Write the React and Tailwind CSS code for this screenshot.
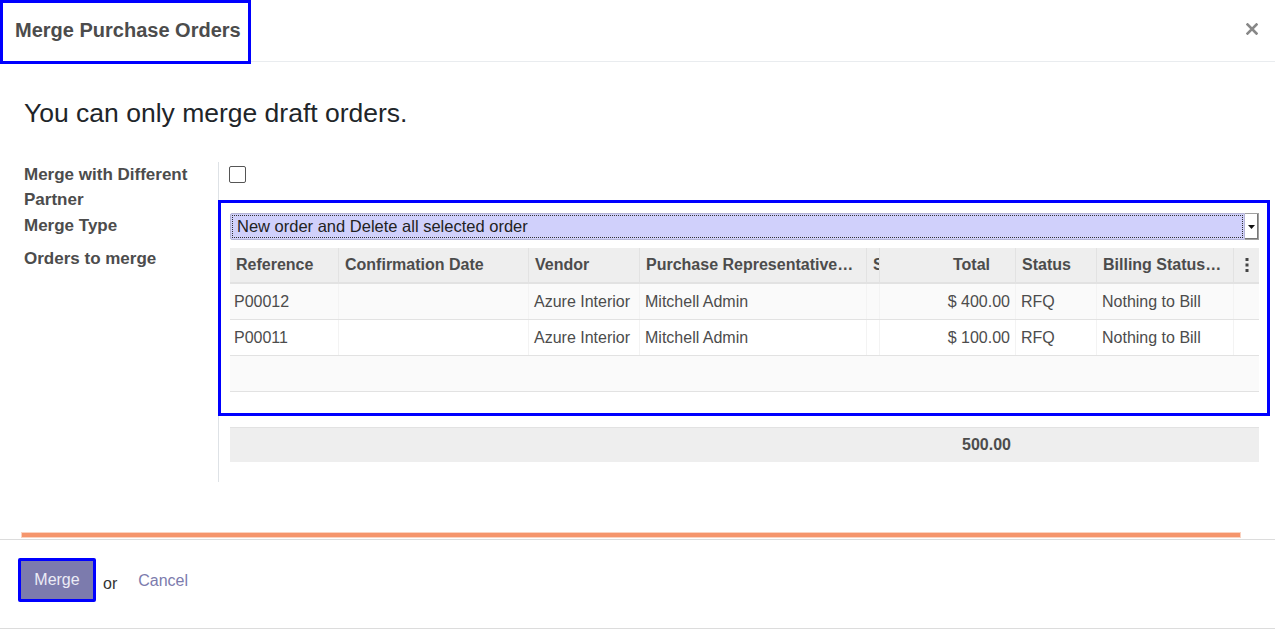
import React from "react";

const cols = "grid grid-cols-[109px_190px_111px_227px_13px_136px_81px_137px_25px]";

const orders = [
  { ref: "P00012", vendor: "Azure Interior", rep: "Mitchell Admin", total: "$ 400.00", status: "RFQ", billing: "Nothing to Bill" },
  { ref: "P00011", vendor: "Azure Interior", rep: "Mitchell Admin", total: "$ 100.00", status: "RFQ", billing: "Nothing to Bill" },
];

function HeadCell({ children, right }) {
  return (
    <div
      className={
        "h-[34px] flex items-center px-[6px] overflow-hidden whitespace-nowrap font-bold border-r border-[#e2e2e2] " +
        (right ? "justify-end pr-[25px]" : "")
      }
    >
      {children}
    </div>
  );
}

function Cell({ children, right, first }) {
  return (
    <div
      className={
        "h-[35px] flex items-center overflow-hidden whitespace-nowrap border-r border-[#f3f3f3] " +
        (first ? "pl-[4px] " : "pl-[5px] ") +
        (right ? "justify-end pr-[5px]" : "")
      }
    >
      {children}
    </div>
  );
}

export default function App() {
  return (
    <div className="h-[629px] bg-white flex flex-col text-[#4c4c4c] text-[16px] font-['Liberation_Sans',Arial,sans-serif]">
      <header className="h-[62px] shrink-0 border-b border-[#e9ecef] flex items-start justify-between">
        <div className="relative z-10 w-[251px] h-[64px] border-[3px] border-[#0000ff] bg-white flex items-center pl-[12px] pb-[4px] text-[20px] font-bold">
          Merge Purchase Orders
        </div>
        <button className="mt-[23px] mr-[17px] text-[#888]">
          <svg width="12" height="12" viewBox="0 0 12 12">
            <path d="M1.5 1.5 L10.5 10.5 M10.5 1.5 L1.5 10.5" stroke="currentColor" strokeWidth="2.6" strokeLinecap="square" />
          </svg>
        </button>
      </header>

      <div className="pl-[24px]">
        <h2 className="mt-[36px] text-[26.5px] leading-[30px] text-[#212529]">You can only merge draft orders.</h2>

        <div className="mt-[34px] flex">
          <div className="w-[195px] shrink-0 border-r border-[#dee2e6] font-bold text-[17px] leading-[25px]">
            <div className="w-[175px]">Merge with Different Partner</div>
            <div className="mt-[1px]">Merge Type</div>
            <div className="mt-[8px]">Orders to merge</div>
          </div>

          <div className="flex-1 pl-[11px] pr-[16px] pb-[20px]">
            <div className="ml-[-1px] mt-[4px] w-[17px] h-[17px] border border-[#555] rounded-[2px] bg-white" />

            <div className="mt-[17px] ml-[-12px] mr-[-11px] border-[3px] border-[#0000ff] pt-[10px] pl-[9px] pr-[8px] pb-[21px]">
              <div className="h-[27px] flex">
                <div className="flex-1 flex items-center bg-[#d0d0fb] rounded-l-[2px] border border-[#b5b5d5] outline outline-1 outline-dotted outline-[#333] outline-offset-[-3px] pl-[6px] text-[16.5px] text-[#222]">
                  New order and Delete all selected order
                </div>
                <div className="w-[14px] flex items-center justify-center bg-white border-y border-r border-[#a0a0a0] shadow-[inset_-1px_-1px_0_#777]">
                  <svg width="7" height="4" viewBox="0 0 7 4">
                    <path d="M0 0 H7 L3.5 4 Z" fill="#111" />
                  </svg>
                </div>
              </div>

              <div className="mt-[8px]">
                <div className={cols + " bg-[#eeeeee] border-b-2 border-[#e2e2e2]"}>
                  <HeadCell>Reference</HeadCell>
                  <HeadCell>Confirmation Date</HeadCell>
                  <HeadCell>Vendor</HeadCell>
                  <HeadCell>Purchase Representative…</HeadCell>
                  <HeadCell>Source</HeadCell>
                  <HeadCell right>Total</HeadCell>
                  <HeadCell>Status</HeadCell>
                  <HeadCell>Billing Status…</HeadCell>
                  <div className="h-[34px] flex items-center justify-center">
                    <svg width="4" height="14" viewBox="0 0 4 14">
                      <rect x="0.5" y="0" width="3" height="3" fill="#444" />
                      <rect x="0.5" y="5.5" width="3" height="3" fill="#444" />
                      <rect x="0.5" y="11" width="3" height="3" fill="#444" />
                    </svg>
                  </div>
                </div>

                {orders.map((o, i) => (
                  <div
                    key={o.ref}
                    className={cols + " border-b border-[#e2e2e2] " + (i % 2 === 0 ? "bg-[#fafafa]" : "bg-white")}
                  >
                    <Cell first>{o.ref}</Cell>
                    <Cell></Cell>
                    <Cell>{o.vendor}</Cell>
                    <Cell>{o.rep}</Cell>
                    <Cell></Cell>
                    <Cell right>{o.total}</Cell>
                    <Cell>{o.status}</Cell>
                    <Cell>{o.billing}</Cell>
                    <div />
                  </div>
                ))}
                <div className="h-[36px] bg-[#fafafa] border-b border-[#e2e2e2]" />
              </div>
            </div>

            <div className={cols + " mt-[11px] h-[35px] bg-[#eeeeee] border-t border-[#e2e2e2]"}>
              <div />
              <div />
              <div />
              <div />
              <div />
              <div className="flex items-center justify-end pr-[5px] font-bold">500.00</div>
              <div />
              <div />
              <div />
            </div>
          </div>
        </div>
      </div>

      <div className="mt-[51px] ml-[22px] w-[1218px] h-[4px] bg-[#f5956c] shadow-[0_0_0_1px_#fbd3c1]" />

      <footer className="mt-[2px] h-[90px] border-y border-[#dcdcdc] flex items-start pt-[18px] pl-[18px]">
        <div className="border-[3px] border-[#0000ff] rounded-[2px]">
          <button className="w-[72px] h-[38px] bg-[#7c7bad] text-[#ececf6] text-[16px]">Merge</button>
        </div>
        <span className="ml-[7px] mt-[14px] text-[#333]">or</span>
        <button className="ml-[21px] mt-[11px] text-[#7c7bad]">Cancel</button>
      </footer>
    </div>
  );
}
